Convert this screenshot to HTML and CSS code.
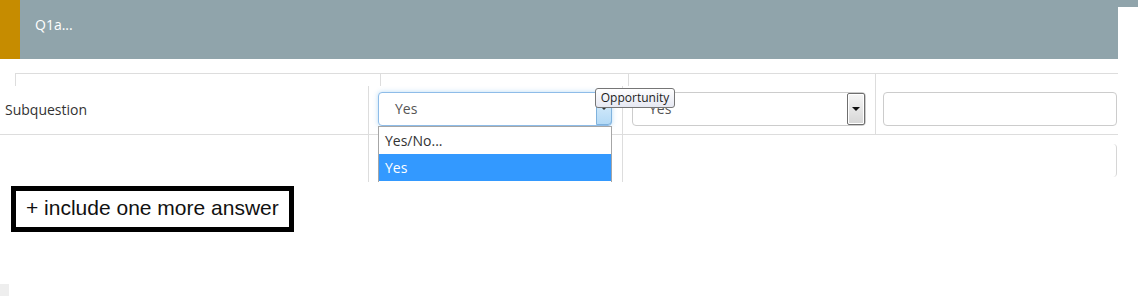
FILE: index.html
```html
<!DOCTYPE html>
<html lang="en">
<head>
<meta charset="UTF-8" />
<title>Question editor</title>
<link rel="stylesheet" href="styles.css">
</head>
<body>

<div class="q-head">
  <div class="q-mark"></div>
  <div class="q-title">Q1a...</div>
  <div class="q-corner"></div>
</div>

<div class="grid-wrap">
  <div class="grid-head">
    <span class="gh-gap"></span>
    <span class="gh-cell"></span>
    <span class="gh-cell"></span>
    <span class="gh-cell"></span>
    <span class="gh-cell"></span>
  </div>

  <div class="grid-row row-main">
    <div class="cell cell-label">Subquestion</div>
    <div class="cell cell-ctl">
      <div class="select select-open">
        <span class="select-text">Yes</span>
        <span class="sel-btn sel-btn-hot"><i class="caret caret-small"></i></span>
        <ul class="sel-list">
          <li>Yes/No...</li>
          <li class="picked">Yes</li>
        </ul>
      </div>
      <div class="tip">Opportunity</div>
    </div>
    <div class="cell cell-ctl">
      <div class="select">
        <span class="select-text">Yes</span>
        <span class="sel-btn sel-btn-grey"><i class="caret"></i></span>
      </div>
    </div>
    <div class="cell cell-ctl">
      <div class="text-input"></div>
    </div>
  </div>

  <div class="grid-row row-blank">
    <div class="cell"></div>
    <div class="cell"></div>
    <div class="cell"></div>
    <div class="cell cell-plain">
      <div class="ghost-input"></div>
    </div>
  </div>
</div>

<button class="add-answer">+ include one more answer</button>

<div class="corner-bit"></div>

</body>
</html>
```

FILE: styles.css
```css
body {
  margin: 0;
  background: #fff;
  font-family: "Open Sans", "DejaVu Sans", sans-serif;
  color: #333;
  width: 1146px;
  height: 296px;
  overflow: hidden;
}

/* question header */
.q-head {
  display: flex;
  height: 59px;
}

.q-mark {
  width: 20px;
  background: #c68c00;
}

.q-title {
  width: 1098px;
  box-sizing: border-box;
  background: #90a4ab;
  color: #fff;
  font-size: 14px;
  line-height: 19px;
  padding: 15px 0 0 15px;
}

.q-corner {
  width: 20px;
  height: 7px;
  background: #90a4ab;
}

/* answers grid */
.grid-wrap {
  margin-top: 14px;
  width: 1118px;
  height: 109px;
  overflow: hidden;
}

.grid-head {
  display: grid;
  grid-template-columns: 15px 365px 248px 247px 243px;
  height: 13px;
}

.gh-cell {
  border-top: 1px solid #ddd;
  border-left: 1px solid #ddd;
}

.grid-row {
  display: grid;
  grid-template-columns: 368px 254px 253px 243px;
}

.row-main {
  height: 49px;
  box-sizing: border-box;
  border-bottom: 1px solid #ddd;
}

.row-blank {
  height: 47px;
}

.cell {
  position: relative;
  border-left: 1px solid #ddd;
}

.cell:first-child {
  border-left: none;
}

.cell-plain {
  border-left: none;
}

.cell-label {
  font-size: 14px;
  line-height: 48px;
  padding-left: 5px;
  color: #333;
}

.cell-ctl {
  padding: 6px 0 0 9px;
}

.cell-ctl:last-child {
  padding-left: 7px;
}

.select {
  position: relative;
  width: 234px;
  height: 34px;
  box-sizing: border-box;
  border: 1px solid #ccc;
  border-radius: 4px;
  background: #fff;
  font-size: 14px;
  line-height: 32px;
  color: #555;
}

.select-text {
  padding-left: 16px;
}

.select-open {
  border-color: #8ebce8;
  box-shadow: 0 0 5px rgba(102, 175, 233, 0.45);
}

.sel-btn {
  position: absolute;
  top: 0;
  bottom: 0;
  display: flex;
  align-items: center;
  justify-content: center;
  box-sizing: border-box;
}

.sel-btn-hot {
  right: -1px;
  width: 16px;
  background: linear-gradient(#e2f1fc, #b4daf6);
  border: 1px solid #7fb2dd;
  border-radius: 0 4px 4px 0;
  align-items: flex-start;
  padding-top: 14px;
}

.sel-btn-grey {
  right: 0;
  width: 18px;
  background: linear-gradient(#f6f6f6, #d6d6d6);
  border: 1px solid #6f6f6f;
  border-radius: 2px;
  box-shadow: inset 0 0 0 1px #fff;
}

.caret {
  width: 0;
  height: 0;
  border-left: 4px solid transparent;
  border-right: 4px solid transparent;
  border-top: 4px solid #111;
}

.caret-small {
  border-left-width: 2px;
  border-right-width: 2px;
  border-top-width: 2px;
  border-top-color: #333;
}

.sel-list {
  position: absolute;
  top: 33px;
  left: -1px;
  width: 234px;
  margin: 0;
  padding: 0 0 6px;
  list-style: none;
  box-sizing: border-box;
  background: #fff;
  border: 1px solid #a6a6a6;
  z-index: 5;
  color: #333;
}

.sel-list li {
  height: 27px;
  line-height: 27px;
  padding-left: 6px;
}

.sel-list li.picked {
  background: #3399ff;
  color: #fff;
}

.tip {
  position: absolute;
  left: 226px;
  top: 2px;
  width: 80px;
  height: 20px;
  box-sizing: border-box;
  border: 1px solid #767676;
  border-radius: 3px;
  background: linear-gradient(#fff, #e6e8f2);
  font-size: 12px;
  line-height: 18px;
  text-align: center;
  color: #1b1b1b;
  z-index: 10;
}

.text-input {
  width: 234px;
  height: 34px;
  box-sizing: border-box;
  border: 1px solid #ccc;
  border-radius: 4px;
}

.ghost-input {
  margin: 9px 0 0 8px;
  width: 234px;
  height: 33px;
  box-sizing: border-box;
  border-right: 1px solid #d6d6d6;
  border-radius: 4px;
}

/* add answer */
.add-answer {
  display: block;
  margin: 4px 0 0 11px;
  width: 283px;
  height: 46px;
  box-sizing: border-box;
  border: 5px solid #000;
  background: #fff;
  padding: 0 0 2px 10px;
  text-align: left;
  font-family: "Liberation Sans", Arial, sans-serif;
  font-size: 21px;
  color: #111;
  cursor: pointer;
}

.corner-bit {
  margin-top: 52px;
  width: 9px;
  height: 12px;
  background: #eee;
}
```
